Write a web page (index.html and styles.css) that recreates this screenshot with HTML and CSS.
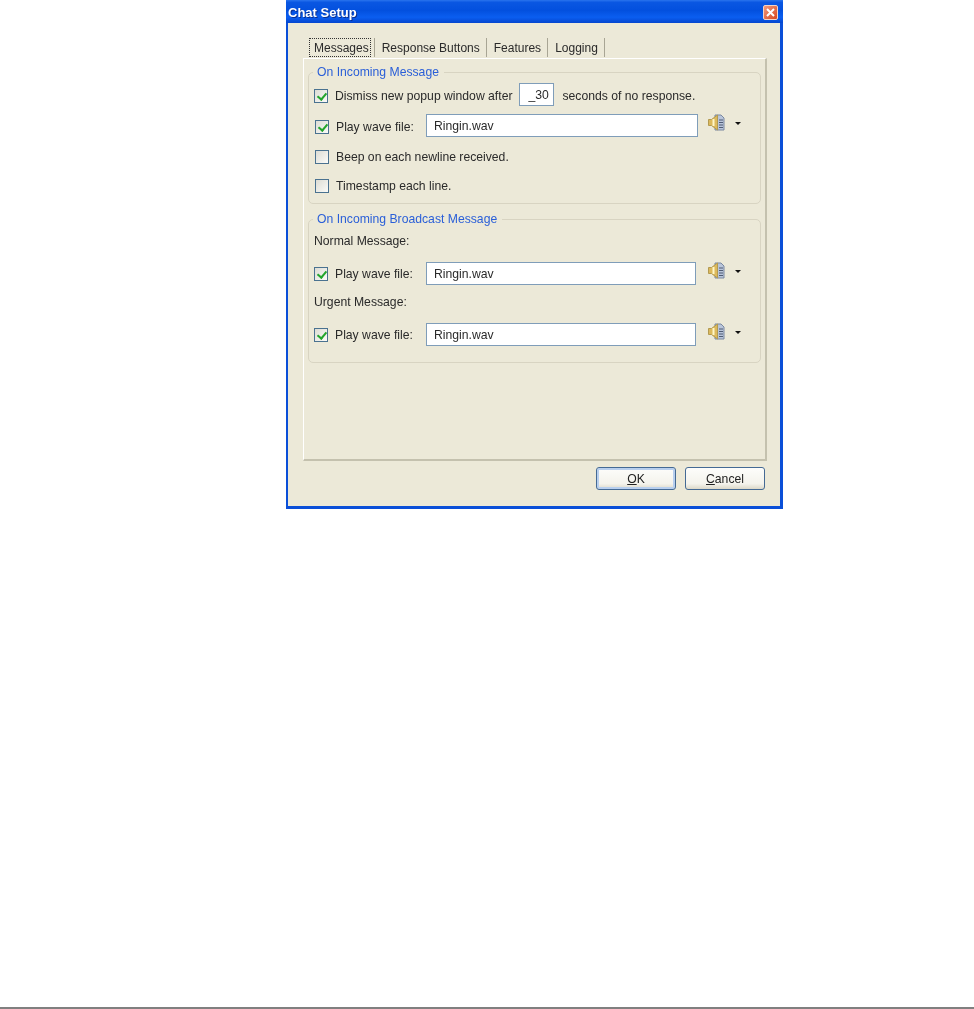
FILE: index.html
```html
<!DOCTYPE html>
<html lang="en">
<head>
  <meta charset="UTF-8" />
  <title>Chat Setup</title>
  <link rel="stylesheet" href="styles.css">
</head>
<body>
  <svg class="defs" width="0" height="0">
    <symbol id="wave" viewBox="0 0 18 17">
      <path d="M7 1h6l3 3v12H7z" fill="#b9c5da" stroke="#7a88a0" stroke-width="1"/>
      <path d="M11 6h4M11 8.500h4M11 11h4M11 13.500h4" stroke="#4f5b74" stroke-width="1"/>
      <path d="M0.500 5.500h3l6-4.500v15l-6-4.500h-3z" fill="#dcb95c" stroke="#b39a50" stroke-width="1"/>
      <path d="M5.500 5v7" stroke="#fff6c8" stroke-width="2"/>
    </symbol>
  </svg>

  <div class="window">
    <div class="titlebar">
      <span class="title">Chat Setup</span>
      <span class="close">
        <svg width="9" height="9" viewBox="0 0 9 9"><path d="M1 1l7 7M8 1l-7 7" stroke="#fff" stroke-width="2"/></svg>
      </span>
    </div>

    <div class="client">
      <div class="tabs">
        <span class="tab active"><span class="focus">Messages</span></span>
        <span class="tab">Response Buttons</span>
        <span class="tab">Features</span>
        <span class="tab">Logging</span>
      </div>

      <div class="panel">
        <fieldset class="group group-first">
          <legend>On Incoming Message</legend>
          <div class="row row-dismiss">
            <span class="check on"></span>
            <span class="label">Dismiss new popup window after</span>
            <span class="field field-small">_30</span>
            <span class="label">seconds of no response.</span>
          </div>
          <div class="row row-wave">
            <span class="check on shift"></span>
            <span class="label label-wave">Play wave file:</span>
            <span class="field field-wide">Ringin.wav</span>
            <svg class="wave-icon" width="18" height="17"><use href="#wave"/></svg>
            <span class="arrow"></span>
          </div>
          <div class="row row-beep">
            <span class="check shift"></span>
            <span class="label">Beep on each newline received.</span>
          </div>
          <div class="row row-stamp">
            <span class="check shift"></span>
            <span class="label">Timestamp each line.</span>
          </div>
        </fieldset>

        <fieldset class="group group-second">
          <legend>On Incoming Broadcast Message</legend>
          <div class="row row-heading"><span class="label">Normal Message:</span></div>
          <div class="row row-wave2">
            <span class="check on"></span>
            <span class="label label-wave2">Play wave file:</span>
            <span class="field field-wide2">Ringin.wav</span>
            <svg class="wave-icon" width="18" height="17"><use href="#wave"/></svg>
            <span class="arrow"></span>
          </div>
          <div class="row row-heading2"><span class="label">Urgent Message:</span></div>
          <div class="row row-wave2">
            <span class="check on"></span>
            <span class="label label-wave2">Play wave file:</span>
            <span class="field field-wide2">Ringin.wav</span>
            <svg class="wave-icon" width="18" height="17"><use href="#wave"/></svg>
            <span class="arrow"></span>
          </div>
        </fieldset>
      </div>

      <div class="buttons">
        <button class="btn btn-default"><u>O</u>K</button>
        <button class="btn"><u>C</u>ancel</button>
      </div>
    </div>
  </div>

  <div class="rule"></div>
</body>
</html>
```

FILE: styles.css
```css
* {
  margin: 0;
  padding: 0;
  box-sizing: border-box;
}
html, body {
  height: 100%;
}
body {
  background: #fff;
  color: #2a2a2a;
  font-family: 'Liberation Sans', Arial, sans-serif;
  font-size: 12.2px;
  display: flex;
  flex-direction: column;
}
.defs {
  position: absolute;
}
.window {
  width: 497px;
  height: 509px;
  margin-left: 286px;
  background: #0a4fd8;
  padding: 0 3px 3px 2px;
  display: flex;
  flex-direction: column;
  flex: none;
  filter: blur(0.35px);
}
.titlebar {
  height: 23px;
  margin: 0 -3px 0 -2px;
  padding: 2px 5px 0 2px;
  display: flex;
  align-items: center;
  justify-content: space-between;
  background: linear-gradient(#2a74ee 0, #0a57e2 10%, #0350de 45%, #0b5ef0 75%, #0446cf 100%);
}
.title {
  color: #fff;
  font-weight: bold;
  font-size: 13px;
  text-shadow: 1px 1px 0 #0a2f90;
}
.close {
  width: 15px;
  height: 15px;
  border: 1px solid #f3d3c6;
  border-radius: 2px;
  background: linear-gradient(135deg, #f09a7c, #d9471f);
  display: flex;
  align-items: center;
  justify-content: center;
}
.client {
  flex: 1;
  background: #ece9d8;
  padding: 15px 13px 0 15px;
}
.tabs {
  display: flex;
  height: 20px;
  padding-left: 6px;
  font-size: 12px;
}
.tab {
  height: 19px;
  padding: 0 6px 0 7px;
  border-right: 1px solid #a8a594;
  line-height: 20px;
  white-space: nowrap;
}
.tab.active {
  padding: 0 3px 0 0;
}
.focus {
  display: block;
  height: 19px;
  padding: 0 2px 0 5px;
  outline: 1px dotted #333;
  outline-offset: -1px;
}
.panel {
  height: 403px;
  border-top: 1px solid #fff;
  border-left: 1px solid #fff;
  border-right: 2px solid #c4c1ae;
  border-bottom: 2px solid #c4c1ae;
  padding: 6px 4px 0 4px;
}
.group {
  border: 1px solid #d8d4c2;
  border-radius: 5px;
  padding: 0 5px;
  min-width: 0;
}
.group legend {
  color: #2a5fd8;
  margin-left: -1px;
  padding: 0 5px 0 4px;
  line-height: 14px;
}
.group-first {
  height: 139px;
  margin-bottom: 8px;
}
.group-second {
  height: 151px;
}
.row {
  display: flex;
  align-items: center;
  white-space: nowrap;
}
.row-dismiss { height: 23px; margin-top: 4px; }
.row-dismiss .check { margin-top: 2px; }
.row-dismiss .label { margin-top: 3px; }
.row-wave { height: 23px; margin-top: 8px; }
.row-wave .check, .row-wave .label { margin-top: 2px; }
.row-beep { height: 16px; margin-top: 12px; }
.row-stamp { height: 16px; margin-top: 13px; }
.row-wave2 { height: 23px; }
.row-heading { height: 16px; margin-top: 7px; margin-bottom: 13px; }
.row-heading2 { height: 16px; margin-top: 9px; margin-bottom: 13px; }
.check {
  width: 14px;
  height: 14px;
  flex: none;
  margin-right: 7px;
  border: 1px solid #4a7290;
  background: linear-gradient(135deg, #dcdcd4, #fbfbf8);
  position: relative;
}
.check.shift {
  margin-left: 1px;
}
.check.on::after {
  content: "";
  position: absolute;
  left: 4px;
  top: 1px;
  width: 4px;
  height: 7px;
  border-right: 2px solid #22a52c;
  border-bottom: 2px solid #22a52c;
  transform: rotate(40deg);
}
.label-wave {
  width: 90px;
}
.label-wave2 {
  width: 91px;
}
.field {
  height: 23px;
  background: #fff;
  border: 1px solid #7f9db9;
  line-height: 22px;
  padding-left: 7px;
}
.field-small {
  width: 35px;
  margin: 0 8px 0 7px;
  padding-left: 8px;
}
.field-wide {
  width: 272px;
}
.field-wide2 {
  width: 270px;
}
.wave-icon {
  margin-left: 10px;
  margin-top: -7px;
}
.row-wave2 .wave-icon {
  margin-left: 12px;
}
.arrow {
  width: 0;
  height: 0;
  margin-left: 9px;
  margin-top: -5px;
  border-left: 3px solid transparent;
  border-right: 3px solid transparent;
  border-top: 3px solid #111;
}
.buttons {
  display: flex;
  justify-content: flex-end;
  gap: 9px;
  padding: 6px 0 0;
  margin-right: 2px;
}
.btn {
  width: 80px;
  height: 23px;
  font: inherit;
  color: #222;
  border: 1px solid #456a94;
  border-radius: 3px;
  background: linear-gradient(#fdfdfb, #f4f3ec 75%, #dcd8c8);
}
.btn-default {
  box-shadow: inset 0 0 0 2px #b8cfee;
}
.rule {
  margin-top: auto;
  height: 2px;
  background: #808080;
  flex: none;
}
```
